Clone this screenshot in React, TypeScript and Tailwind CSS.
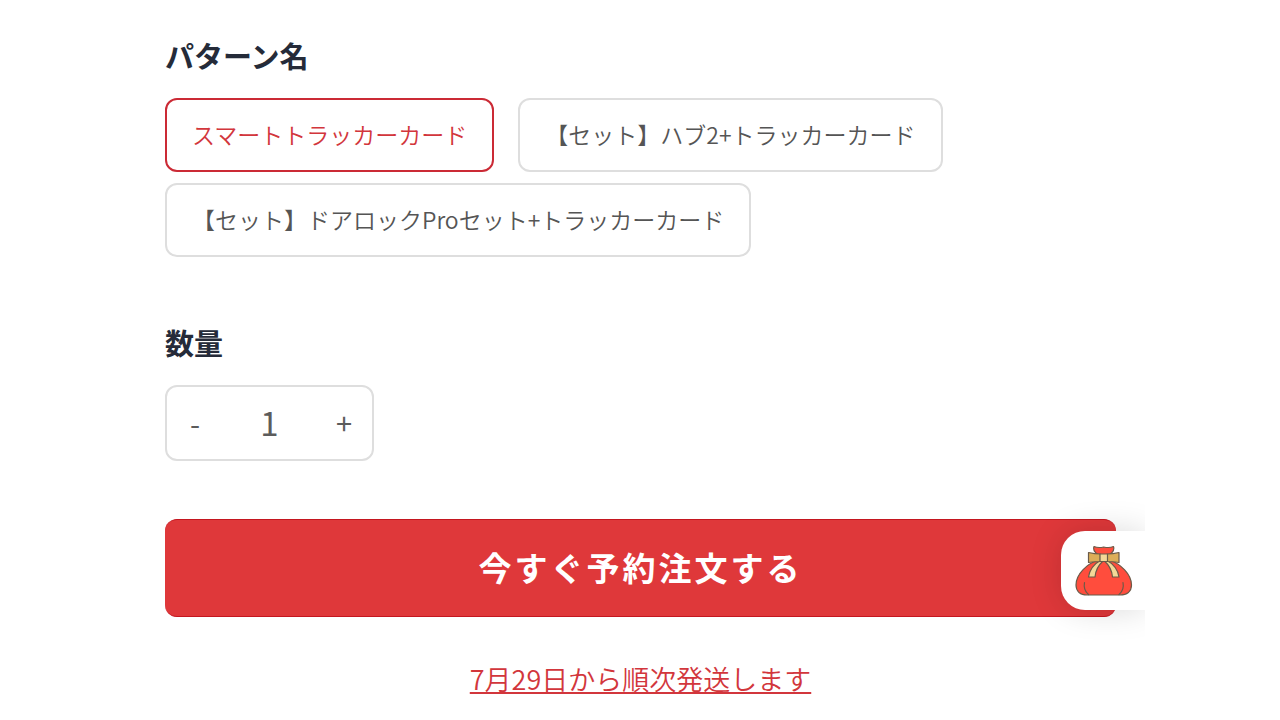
import { useState } from 'react';
import clsx from 'clsx';

const patterns = [
  'スマートトラッカーカード',
  '【セット】ハブ2+トラッカーカード',
  '【セット】ドアロックProセット+トラッカーカード',
];

const headingClass = 'mb-6 block text-[29px] leading-[38px] font-bold text-[#252b39]';

type PatternOptionProps = {
  label: string;
  checked: boolean;
  onSelect: () => void;
};

function PatternOption({ label, checked, onSelect }: PatternOptionProps) {
  return (
    <label
      className={clsx(
        'relative flex h-[74px] cursor-pointer items-center rounded-xl border-2 px-[25px] pb-[2px] text-[23px] leading-8 font-[350]',
        checked ? 'border-[#cb2a35] text-[#d2363c]' : 'border-[#dedede] text-[#555555]',
      )}
    >
      <input
        checked={checked}
        className="sr-only"
        name="pattern"
        onChange={onSelect}
        type="radio"
        value={label}
      />
      {label}
    </label>
  );
}

function LuckyBag() {
  return (
    <svg aria-hidden="true" className="h-[52px] w-[60px]" fill="none" viewBox="0 0 60 52">
      <g stroke="#6b5a48" strokeLinecap="round" strokeLinejoin="round" strokeWidth="1.2">
        <path
          d="M24 15C13 19 2 29 2 40c0 6.500 4.500 10 11 10h33c7 0 11.500-3.500 11.500-10C57.500 29 46.500 19 35.500 15z"
          fill="#ff4d3d"
        />
        <path
          d="M20 1.500c3 1.300 6 1.300 9.700.500 3.700.8 6.800.8 9.800-.500 1.500 3-.5 5.500-4 8.500H24C20.500 7 18.500 4.500 20 1.500z"
          fill="#ff4d3d"
        />
        <path d="M10.500 37.500c-1 5 .5 9 4 12M49 37.500c1 5-.5 9-4 12" />
        <path d="M27 15C20 19 15.500 25 14.500 32h6.500c.5-6 3.500-12 8.500-16.500z" fill="#f3d898" />
        <path d="M32.500 15c7 4 11.500 10 12.500 17h-6.500c-.5-6-3.500-12-8.500-16.500z" fill="#f3d898" />
        <path d="M14.500 7.500c4 1 8 1.500 12 1.500v7.500c-4 0-8 .5-12 1z" fill="#dcae58" />
        <path d="M45 7.500c-4 1-8 1.500-12 1.500v7.500c4 0 8 .5 12 1z" fill="#dcae58" />
        <path d="M26 9h7.500v7.500H26z" fill="#f3d898" />
      </g>
    </svg>
  );
}

export default function App() {
  const [pattern, setPattern] = useState(patterns[0]);
  const [quantity, setQuantity] = useState(1);

  return (
    <main className="mx-auto max-w-[1010px] overflow-hidden bg-white pt-9 pr-[29px] pb-5 pl-[30px] font-['Noto_Sans_CJK_JP',sans-serif]">
      <fieldset>
        <legend className={headingClass}>パターン名</legend>
        <div className="flex flex-wrap gap-x-6 gap-y-[11px]">
          {patterns.map((label) => (
            <PatternOption
              checked={label === pattern}
              key={label}
              label={label}
              onSelect={() => setPattern(label)}
            />
          ))}
        </div>
      </fieldset>

      <section className="mt-[66px]">
        <label className={headingClass} htmlFor="quantity">
          数量
        </label>
        <div className="flex h-[76px] w-[209px] items-stretch rounded-xl border-2 border-[#dedede] text-[#5c5c5c]">
          <button
            aria-label="数量を減らす"
            className="w-14 text-[29px]"
            onClick={() => setQuantity(Math.max(1, quantity - 1))}
            type="button"
          >
            -
          </button>
          <input
            className="min-w-0 flex-1 text-center text-[33px] outline-none"
            id="quantity"
            inputMode="numeric"
            onChange={(event) => setQuantity(Number(event.target.value) || 1)}
            type="text"
            value={quantity}
          />
          <button
            aria-label="数量を増やす"
            className="w-14 text-[29px]"
            onClick={() => setQuantity(quantity + 1)}
            type="button"
          >
            +
          </button>
        </div>
      </section>

      <div className="relative mt-[58px]">
        <button
          className="h-[98px] w-full rounded-xl border-y border-[#c4161f] bg-[#df383a] text-[33px] font-bold tracking-[3px] text-white"
          type="button"
        >
          今すぐ予約注文する
        </button>
        <button
          aria-label="福袋"
          className="absolute top-3 -right-[29px] flex h-[79px] w-21 items-center rounded-l-3xl bg-white pl-[13px] shadow-[0_0_32px_rgba(0,0,0,0.15)]"
          type="button"
        >
          <LuckyBag />
        </button>
      </div>

      <p className="mt-[42px] text-center text-[27px] leading-10 font-[350] text-[#d2363c]">
        <a className="underline decoration-2 underline-offset-2" href="#shipping">
          7月29日から順次発送します
        </a>
      </p>
    </main>
  );
}
